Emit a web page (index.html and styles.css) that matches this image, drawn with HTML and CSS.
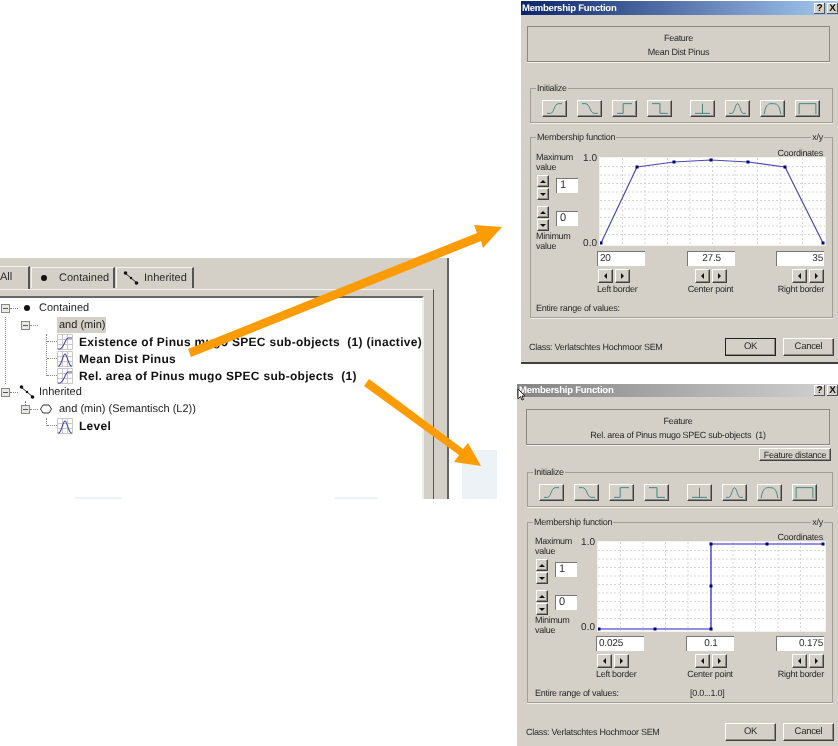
FILE: index.html
```html
<!DOCTYPE html>
<html>
  <head>
    <title>Membership Function</title>
    <link rel="stylesheet" href="styles.css">
  </head>
  <body>
    <svg class="defs" width="0" height="0">
      <symbol id="i-rise" viewBox="0 0 25 17"><path d="M4 14H8C12 14 12 3 17 3H21"/></symbol>
      <symbol id="i-fall" viewBox="0 0 25 17"><path d="M4 3H8C13 3 13 14 18 14H22"/></symbol>
      <symbol id="i-up" viewBox="0 0 25 17"><path d="M4 14H11V3H21"/></symbol>
      <symbol id="i-down" viewBox="0 0 25 17"><path d="M4 3H13V14H22"/></symbol>
      <symbol id="i-spike" viewBox="0 0 25 17"><path d="M4 14H21M12.5 3V14"/></symbol>
      <symbol id="i-bump" viewBox="0 0 25 17"><path d="M3 14H6C9 14 10 3 12.500 3C15 3 16 14 19 14H22"/></symbol>
      <symbol id="i-trap" viewBox="0 0 25 17"><path d="M3 15C5 3 8 3 12 3C17 3 20 3 22 15"/></symbol>
      <symbol id="i-rect" viewBox="0 0 25 17"><path d="M3 15V3H22V15"/></symbol>
      <symbol id="t-grid" viewBox="0 0 16 16"><path class="t-lines" d="M.5 .5H15.5V15.5H.5ZM5.5 .5V15.5M10.5 .5V15.5M.5 5.5H15.5M.5 10.5H15.5"/></symbol>
    </svg>

    <div class="panel">
      <div class="tabs">
        <div class="tab tab-on">All</div>
        <div class="tab tab-contained"><span class="dot"></span>Contained</div>
        <div class="tab tab-inherited">
          <svg class="link-icon" viewBox="0 0 16 14"><path d="M2 2L14 12"/><circle cx="2.5" cy="2" r="1.8"/><circle cx="8" cy="7" r="1.2"/><circle cx="13.5" cy="12" r="1.8"/></svg>
          Inherited
        </div>
      </div>
      <div class="tab-page">
        <div class="tree">
          <div class="row lv1"><span class="exp"></span><span class="dash"></span><span class="slot"><span class="dot"></span></span><span>Contained</span></div>
          <div class="kids1">
            <div class="row lv2"><span class="exp"></span><span class="dash"></span><span class="slot2"></span><span class="sel">and (min)</span></div>
            <div class="kids2">
              <div class="row leaf"><span class="dash-long"></span><svg class="t-icon" viewBox="0 0 16 16"><use href="#t-grid"/><path d="M1 15H3C7 14 8 5 11 4H15"/></svg><b>Existence of Pinus mugo SPEC sub-objects&nbsp; (1) (inactive)</b></div>
              <div class="row leaf"><span class="dash-long"></span><svg class="t-icon" viewBox="0 0 16 16"><use href="#t-grid"/><path d="M1 15H2C5 13 6 3 8 3C10 3 11 13 14 15H15"/></svg><b>Mean Dist Pinus</b></div>
              <div class="row leaf"><span class="dash-long"></span><svg class="t-icon" viewBox="0 0 16 16"><use href="#t-grid"/><path d="M1 15H3C7 14 8 5 11 4H15"/></svg><b>Rel. area of Pinus mugo SPEC sub-objects&nbsp; (1)</b></div>
            </div>
          </div>
          <div class="row lv1"><span class="exp"></span><span class="dash"></span><span class="slot"><svg class="link-icon" viewBox="0 0 16 14"><path d="M2 2L14 12"/><circle cx="2.5" cy="2" r="1.8"/><circle cx="8" cy="7" r="1.2"/><circle cx="13.5" cy="12" r="1.8"/></svg></span><span>Inherited</span></div>
          <div class="kids1 kids-last">
            <div class="row lv2"><span class="exp exp-stub"></span><span class="dash"></span><span class="slot2"><svg class="hex-icon" viewBox="0 0 12 10"><path d="M3 1H9L11.5 5L9 9H3L.5 5Z"/></svg></span><span class="sel-off">and (min) (Semantisch (L2))</span></div>
            <div class="kids2">
              <div class="row leaf"><span class="dash-long"></span><svg class="t-icon" viewBox="0 0 16 16"><use href="#t-grid"/><path d="M1 15H2C5 13 6 3 8 3C10 3 11 13 14 15H15"/></svg><b>Level</b></div>
            </div>
          </div>
        </div>
      </div>
    </div>
    <div class="smudge smudge-a"></div>
    <div class="smudge smudge-b"></div>
    <div class="smudge smudge-c"></div>

    <!-- first dialog -->
    <div class="win win-a">
      <div class="title"><span>Membership Function</span><span class="title-btns"><span class="tbtn">?</span><span class="tbtn">X</span></span></div>
      <div class="win-body">
        <div class="feature"><div>Feature</div><div>Mean Dist Pinus</div></div>
        <div class="feature-row"></div>
        <div class="group init">
          <span class="legend">Initialize</span>
          <span class="btn ib"><svg><use href="#i-rise"/></svg></span>
          <span class="btn ib"><svg><use href="#i-fall"/></svg></span>
          <span class="btn ib"><svg><use href="#i-up"/></svg></span>
          <span class="btn ib"><svg><use href="#i-down"/></svg></span>
          <span class="btn ib ib-gap"><svg><use href="#i-spike"/></svg></span>
          <span class="btn ib"><svg><use href="#i-bump"/></svg></span>
          <span class="btn ib"><svg><use href="#i-trap"/></svg></span>
          <span class="btn ib"><svg><use href="#i-rect"/></svg></span>
        </div>
        <div class="group mf">
          <span class="legend">Membership function</span>
          <span class="legend legend-r">x/y</span>
          <div class="mf-grid">
            <div class="mf-left">
              <div class="cap">Maximum<br>value</div>
              <div class="spin-row"><div class="spin"><span class="btn sb"><i class="tri t-u"></i></span><span class="btn sb"><i class="tri t-d"></i></span></div><span class="input spin-input">1</span></div>
              <div class="spin-row spin-row2"><div class="spin"><span class="btn sb"><i class="tri t-u"></i></span><span class="btn sb"><i class="tri t-d"></i></span></div><span class="input spin-input">0</span></div>
              <div class="cap">Minimum<br>value</div>
            </div>
            <div class="coords">Coordinates</div>
            <div class="axis"><span>1.0</span><span>0.0</span></div>
            <svg class="plot" viewBox="0 0 225 87">
              <path class="grid" d="M22.500 0V87M45 0V87M67.500 0V87M90 0V87M112.500 0V87M135 0V87M157.500 0V87M180 0V87M202.500 0V87M0 8.500H225M0 17H225M0 25.500H225M0 34H225M0 42.500H225M0 51H225M0 59.500H225M0 68H225M0 76.500H225"/>
              <path class="curve curve-a" d="M1 85L37 9L74 4L111 2L148 4L185 9L223 85"/>
              <path class="pts" d="M-.5 83.500h3v3h-3zM35.500 7.500h3v3h-3zM72.500 2.500h3v3h-3zM109.500 .5h3v3h-3zM146.500 2.500h3v3h-3zM183.500 7.500h3v3h-3zM221.500 83.500h3v3h-3z"/>
            </svg>
            <div class="fields">
              <div class="field"><span class="input">20</span><div class="nudge"><span class="btn nb"><i class="tri t-l"></i></span><span class="btn nb"><i class="tri t-r"></i></span></div><span class="cap">Left border</span></div>
              <div class="field field-c"><span class="input">27.5</span><div class="nudge"><span class="btn nb"><i class="tri t-l"></i></span><span class="btn nb"><i class="tri t-r"></i></span></div><span class="cap">Center point</span></div>
              <div class="field field-r"><span class="input">35</span><div class="nudge"><span class="btn nb"><i class="tri t-l"></i></span><span class="btn nb"><i class="tri t-r"></i></span></div><span class="cap">Right border</span></div>
            </div>
          </div>
          <div class="range"><span class="range-label">Entire range of values:</span></div>
        </div>
        <div class="foot"><span class="class-name">Class: Verlatschtes Hochmoor SEM</span><span class="btn fbtn fbtn-def">OK</span><span class="btn fbtn">Cancel</span></div>
      </div>
    </div>

    <!-- second dialog -->
    <div class="win win-b">
      <div class="title"><span>Membership Function</span><span class="title-btns"><span class="tbtn">?</span><span class="tbtn">X</span></span></div>
      <div class="win-body">
        <div class="feature"><div>Feature</div><div>Rel. area of Pinus mugo SPEC sub-objects&nbsp; (1)</div></div>
        <div class="feature-row"><span class="btn dist">Feature distance</span></div>
        <div class="group init">
          <span class="legend">Initialize</span>
          <span class="btn ib"><svg><use href="#i-rise"/></svg></span>
          <span class="btn ib"><svg><use href="#i-fall"/></svg></span>
          <span class="btn ib"><svg><use href="#i-up"/></svg></span>
          <span class="btn ib"><svg><use href="#i-down"/></svg></span>
          <span class="btn ib ib-gap"><svg><use href="#i-spike"/></svg></span>
          <span class="btn ib"><svg><use href="#i-bump"/></svg></span>
          <span class="btn ib"><svg><use href="#i-trap"/></svg></span>
          <span class="btn ib"><svg><use href="#i-rect"/></svg></span>
        </div>
        <div class="group mf">
          <span class="legend">Membership function</span>
          <span class="legend legend-r">x/y</span>
          <div class="mf-grid">
            <div class="mf-left">
              <div class="cap">Maximum<br>value</div>
              <div class="spin-row"><div class="spin"><span class="btn sb"><i class="tri t-u"></i></span><span class="btn sb"><i class="tri t-d"></i></span></div><span class="input spin-input">1</span></div>
              <div class="spin-row spin-row2"><div class="spin"><span class="btn sb"><i class="tri t-u"></i></span><span class="btn sb"><i class="tri t-d"></i></span></div><span class="input spin-input">0</span></div>
              <div class="cap">Minimum<br>value</div>
            </div>
            <div class="coords">Coordinates</div>
            <div class="axis"><span>1.0</span><span>0.0</span></div>
            <svg class="plot" viewBox="0 0 227 89">
              <path class="grid" d="M22.500 0V89M45 0V89M67.500 0V89M90 0V89M112.500 0V89M135 0V89M157.500 0V89M180 0V89M202.500 0V89M0 8.500H227M0 17H227M0 25.500H227M0 34H227M0 42.500H227M0 51H227M0 59.500H227M0 68H227M0 76.500H227"/>
              <path class="curve curve-b" d="M1 87H113V2H225"/>
              <path class="pts" d="M-.5 85.500h3v3h-3zM55.500 85.500h3v3h-3zM111.500 85.500h3v3h-3zM111.500 42.500h3v3h-3zM111.500 .5h3v3h-3zM167.500 .5h3v3h-3zM223.500 .5h3v3h-3z"/>
            </svg>
            <div class="fields">
              <div class="field"><span class="input">0.025</span><div class="nudge"><span class="btn nb"><i class="tri t-l"></i></span><span class="btn nb"><i class="tri t-r"></i></span></div><span class="cap">Left border</span></div>
              <div class="field field-c"><span class="input">0.1</span><div class="nudge"><span class="btn nb"><i class="tri t-l"></i></span><span class="btn nb"><i class="tri t-r"></i></span></div><span class="cap">Center point</span></div>
              <div class="field field-r"><span class="input">0.175</span><div class="nudge"><span class="btn nb"><i class="tri t-l"></i></span><span class="btn nb"><i class="tri t-r"></i></span></div><span class="cap">Right border</span></div>
            </div>
          </div>
          <div class="range"><span class="range-label">Entire range of values:</span><span>[0.0...1.0]</span></div>
        </div>
        <div class="foot"><span class="class-name">Class: Verlatschtes Hochmoor SEM</span><span class="btn fbtn">OK</span><span class="btn fbtn">Cancel</span></div>
      </div>
    </div>

    <svg class="cursor" viewBox="0 0 8 13"><path d="M1 1V11L3.500 8.500L5 12L6.500 11.500L5 8H8Z"/></svg>

    <svg class="arrows" viewBox="0 0 838 746">
      <path d="M188 349L477 233L474 225L502 227L483 248L481 241L191 357Z"/>
      <path d="M369 379L463 449L468 443L481 466L454 462L459 455L364 386Z"/>
    </svg>
  </body>
</html>
```

FILE: styles.css
```css
html, body { margin: 0; padding: 0; }
body { width: 838px; height: 746px; position: relative; overflow: hidden; background: #fff; color: #2a2a2a; font-family: "Liberation Sans", Arial, sans-serif; font-size: 9px; letter-spacing: -.28px; text-rendering: geometricPrecision; }
.defs { position: absolute; }

/* left panel with the tree */
.panel { position: absolute; left: 0; top: 258px; width: 447px; height: 241px; display: flex; flex-direction: column; background: #d4d0c8; border-right: 2px solid #666; font-size: 11px; letter-spacing: 0; filter: blur(.4px); }
.tabs { display: flex; align-items: flex-end; height: 31px; box-sizing: border-box; padding-bottom: 1px; }
.tab { display: flex; align-items: center; box-sizing: border-box; height: 21px; border-top: 1px solid #f4f3f0; border-right: 2px solid #555; border-left: 1px solid #f4f3f0; }
.tab-on { width: 30px; height: 24px; margin-bottom: -2px; border-left: 0; padding-bottom: 3px; }
.tab-contained { width: 84px; margin-left: 1px; }
.tab-contained .dot { margin: 0 12px 0 9px; }
.tab-inherited { width: 78px; margin-left: 1px; gap: 5px; padding-left: 6px; }
.dot { display: inline-block; flex: none; width: 6px; height: 6px; border-radius: 50%; background: #111; }
.link-icon { width: 16px; height: 14px; flex: none; }
.link-icon path { stroke: #222; fill: none; }
.link-icon circle { fill: #111; }

.tab-page { flex: 1; display: flex; margin-right: 13px; padding: 6px 10px 0 0; border-top: 1px solid #f4f3f0; border-right: 1px solid #555; min-height: 0; }
.tree { flex: 1; background: #fff; border-top: 2px solid #666; border-right: 2px solid #eeedea; padding-top: 2px; color: #222; }
.row { display: flex; align-items: center; height: 16.8px; position: relative; white-space: nowrap; }
.row b { font-size: 12px; letter-spacing: .29px; color: #111; }
.exp { flex: none; box-sizing: border-box; width: 9px; height: 9px; border: 1px solid #888; background: linear-gradient(#555, #555) center / 5px 1px no-repeat, #e8e8e4; position: relative; }
.exp-stub::before { content: ""; position: absolute; left: 3px; top: -5px; height: 4px; border-left: 1px dotted #888; }
.dash { flex: none; width: 8px; border-top: 1px dotted #888; }
.dash-long { flex: none; width: 10px; border-top: 1px dotted #888; }
.lv1 { padding-left: 1px; }
.slot { flex: none; width: 21px; display: flex; justify-content: center; box-sizing: border-box; padding-right: 3px; }
.lv2 { padding-left: 15px; }
.slot2 { flex: none; width: 19px; display: flex; padding-left: 2px; box-sizing: border-box; }
.sel { background: #d4d0c8; padding: 0 1px 0 2px; line-height: 16px; }
.sel-off { padding-left: 2px; }
.hex-icon { width: 12px; height: 10px; }
.hex-icon path { fill: #fff; stroke: #333; }
.kids1 { margin-left: 5px; border-left: 1px dotted #888; }
.kids-last { border-left-color: transparent; }
.kids2 { margin-left: 40px; border-left: 1px dotted #888; }
.leaf:last-child::before { content: ""; position: absolute; left: -1px; top: 9px; bottom: 0; width: 1px; background: #fff; }
.t-icon { width: 16px; height: 16px; flex: none; margin-right: 6px; }
.t-icon > path { fill: none; stroke: #4040bc; stroke-width: 1.1; }
.t-lines { fill: none; stroke: #c8c8c8; }

.smudge { position: absolute; background: #edf2f6; }
.smudge-a { left: 462px; top: 450px; width: 35px; height: 49px; }
.smudge-b { left: 75px; top: 497px; width: 47px; height: 2px; }
.smudge-c { left: 335px; top: 497px; width: 43px; height: 2px; }

/* dialogs */
.win { position: absolute; display: flex; flex-direction: column; box-sizing: border-box; background: #d4d0c8; filter: blur(.4px); }
.win-a { left: 521px; top: 1px; width: 317px; height: 363px; border-bottom: 2px solid #404040; }
.win-b { left: 517px; top: 384px; width: 321px; height: 362px; }
.title { display: flex; align-items: center; justify-content: space-between; height: 14px; flex: none; padding-left: 1px; font-size: 9.5px; letter-spacing: -.22px; font-weight: bold; color: #fff; background: linear-gradient(90deg, #0a246a, #a6caf0); }
.win-b .title { height: 13px; padding-left: 2px; background: linear-gradient(90deg, #848484, #d2d2d2); }
.title-btns { display: flex; gap: 2px; color: #111; font-size: 10px; }
.tbtn { width: 11px; height: 11px; line-height: 11px; text-align: center; background: #d4d0c8; box-shadow: inset -1px -1px #555, inset 1px 1px #fff; }

.win-body { flex: 1; padding: 11px 8px 0 6px; }
.win-b .win-body { padding: 12px 8px 0 9px; }
.feature { height: 36px; box-sizing: border-box; padding-top: 2px; border: 1px solid #8a8880; box-shadow: 0 1px #f0efec; display: flex; flex-direction: column; justify-content: center; gap: 4px; text-align: center; line-height: 10px; }
.feature-row { display: flex; justify-content: flex-end; height: 26px; padding-top: 3px; box-sizing: border-box; }
.win-b .feature-row { height: 27px; }
.dist { width: 72px; height: 13px; margin-right: -1px; line-height: 12px; text-align: center; white-space: nowrap; }

.group { position: relative; box-sizing: border-box; border: 1px solid #a09e96; box-shadow: 0 1px #f0efec; margin: 0 -3px 0 3px; }
.win-b .group { margin: 0 -3px 0 1px; }
.legend { position: absolute; left: 5px; top: -6px; padding: 0 1px; background: #d4d0c8; line-height: 10px; }
.legend-r { left: auto; right: 8px; }

.btn { display: inline-block; box-sizing: border-box; background: #d4d0c8; border-top: 1px solid #fff; border-left: 1px solid #fff; border-right: 1px solid #404040; border-bottom: 1px solid #404040; box-shadow: inset -1px -1px #8c8a84; }

.init { display: flex; gap: 10px; height: 35px; padding: 11px 0 0 11px; }
.ib { width: 25px; height: 17px; }
.ib svg { display: block; width: 23px; height: 15px; fill: none; stroke: #3f8585; stroke-width: 1.1; }
.ib-gap { margin-left: 8px; }

.mf { margin-top: 14px; height: 181px; padding: 10px 7px 0 5px; }
.win-b .mf { margin-top: 15px; padding: 9px 7px 0 7px; }
.mf-grid { display: grid; grid-template-columns: 47px 17px 225px; grid-template-rows: 10px 87px auto; }
.win-b .mf-grid { grid-template-columns: 46px 17px 227px; grid-template-rows: 10px 89px auto; }
.mf-left { grid-row: 1 / 4; padding-top: 4px; }
.cap { line-height: 10px; }
.spin-row { display: flex; align-items: flex-start; gap: 7px; margin-top: 3px; padding-left: 1px; }
.spin-row .spin-input { margin-top: 3px; }
.spin-row2 { margin-top: 6px; }
.spin-row2 .spin-input { margin-top: 5px; }
.spin { display: flex; flex-direction: column; gap: 1px; }
.sb { width: 12px; height: 12px; display: flex; align-items: center; justify-content: center; }
.input { display: block; box-sizing: border-box; width: 48px; height: 15px; padding: 0 1px 0 2px; line-height: 13px; font-size: 10px; letter-spacing: -.2px; background: #fff; border-top: 1px solid #777; border-left: 1px solid #777; white-space: nowrap; }
.spin-input { width: 22px; padding-left: 3px; font-size: 11px; }
.tri { display: block; width: 0; height: 0; border: 3px solid transparent; }
.t-u { border-bottom-color: #111; border-top-width: 0; }
.t-d { border-top-color: #111; border-bottom-width: 0; }
.t-l { border-right-color: #111; border-left-width: 0; }
.t-r { border-left-color: #111; border-right-width: 0; }

.coords { grid-column: 2 / 4; text-align: right; padding-right: 2px; line-height: 10px; }
.axis { display: flex; flex-direction: column; justify-content: space-between; margin-right: 3px; line-height: 10px; font-size: 10px; letter-spacing: 0; text-align: right; margin-top: -4px; height: 95px; }
.plot { width: 100%; height: 100%; display: block; background: #fff; box-shadow: 0 0 0 1px #f2f1ee; }
.grid { fill: none; stroke: #d6d6d6; stroke-width: 1; stroke-dasharray: 2 2; }
.curve { fill: none; stroke-width: 1.2; }
.curve-a { stroke: #4a4ab0; }
.curve-b { stroke: #2020c8; }
.pts { fill: #000080; }

.fields { grid-column: 2 / 4; display: flex; justify-content: space-between; padding: 6px 1px 0 14px; }
.win-b .fields { padding: 5px 1px 0 15px; }
.field { display: flex; flex-direction: column; width: 48px; }
.field-c { align-items: center; }
.field-c .input { text-align: center; }
.field-r { align-items: flex-end; }
.field-r .input { text-align: right; }
.field .cap { white-space: nowrap; margin-top: 1px; }
.nudge { display: flex; gap: 2px; margin: 3px 0 0 1px; }
.field-r .nudge { margin-left: 0; }
.nb { width: 15px; height: 14px; display: flex; align-items: center; justify-content: center; }

.range { display: flex; margin-top: 9px; line-height: 10px; }
.range-label { width: 155px; }
.foot { display: flex; align-items: center; margin: 20px -4px 0 2px; }
.win-b .foot { margin-left: 0; }
.class-name { flex: 1; }
.fbtn { width: 51px; height: 18px; margin-left: 7px; line-height: 15px; text-align: center; font-size: 9.5px; }
.fbtn-def { outline: 1px solid #222; outline-offset: -1px; }

/* things lying over the page */
.cursor { position: absolute; left: 517px; top: 388px; width: 8px; height: 13px; }
.cursor path { fill: #fff; stroke: #222; stroke-width: 1; }
.arrows { position: absolute; left: 0; top: 0; width: 838px; height: 746px; pointer-events: none; }
.arrows path { fill: #fd9c02; }
```
